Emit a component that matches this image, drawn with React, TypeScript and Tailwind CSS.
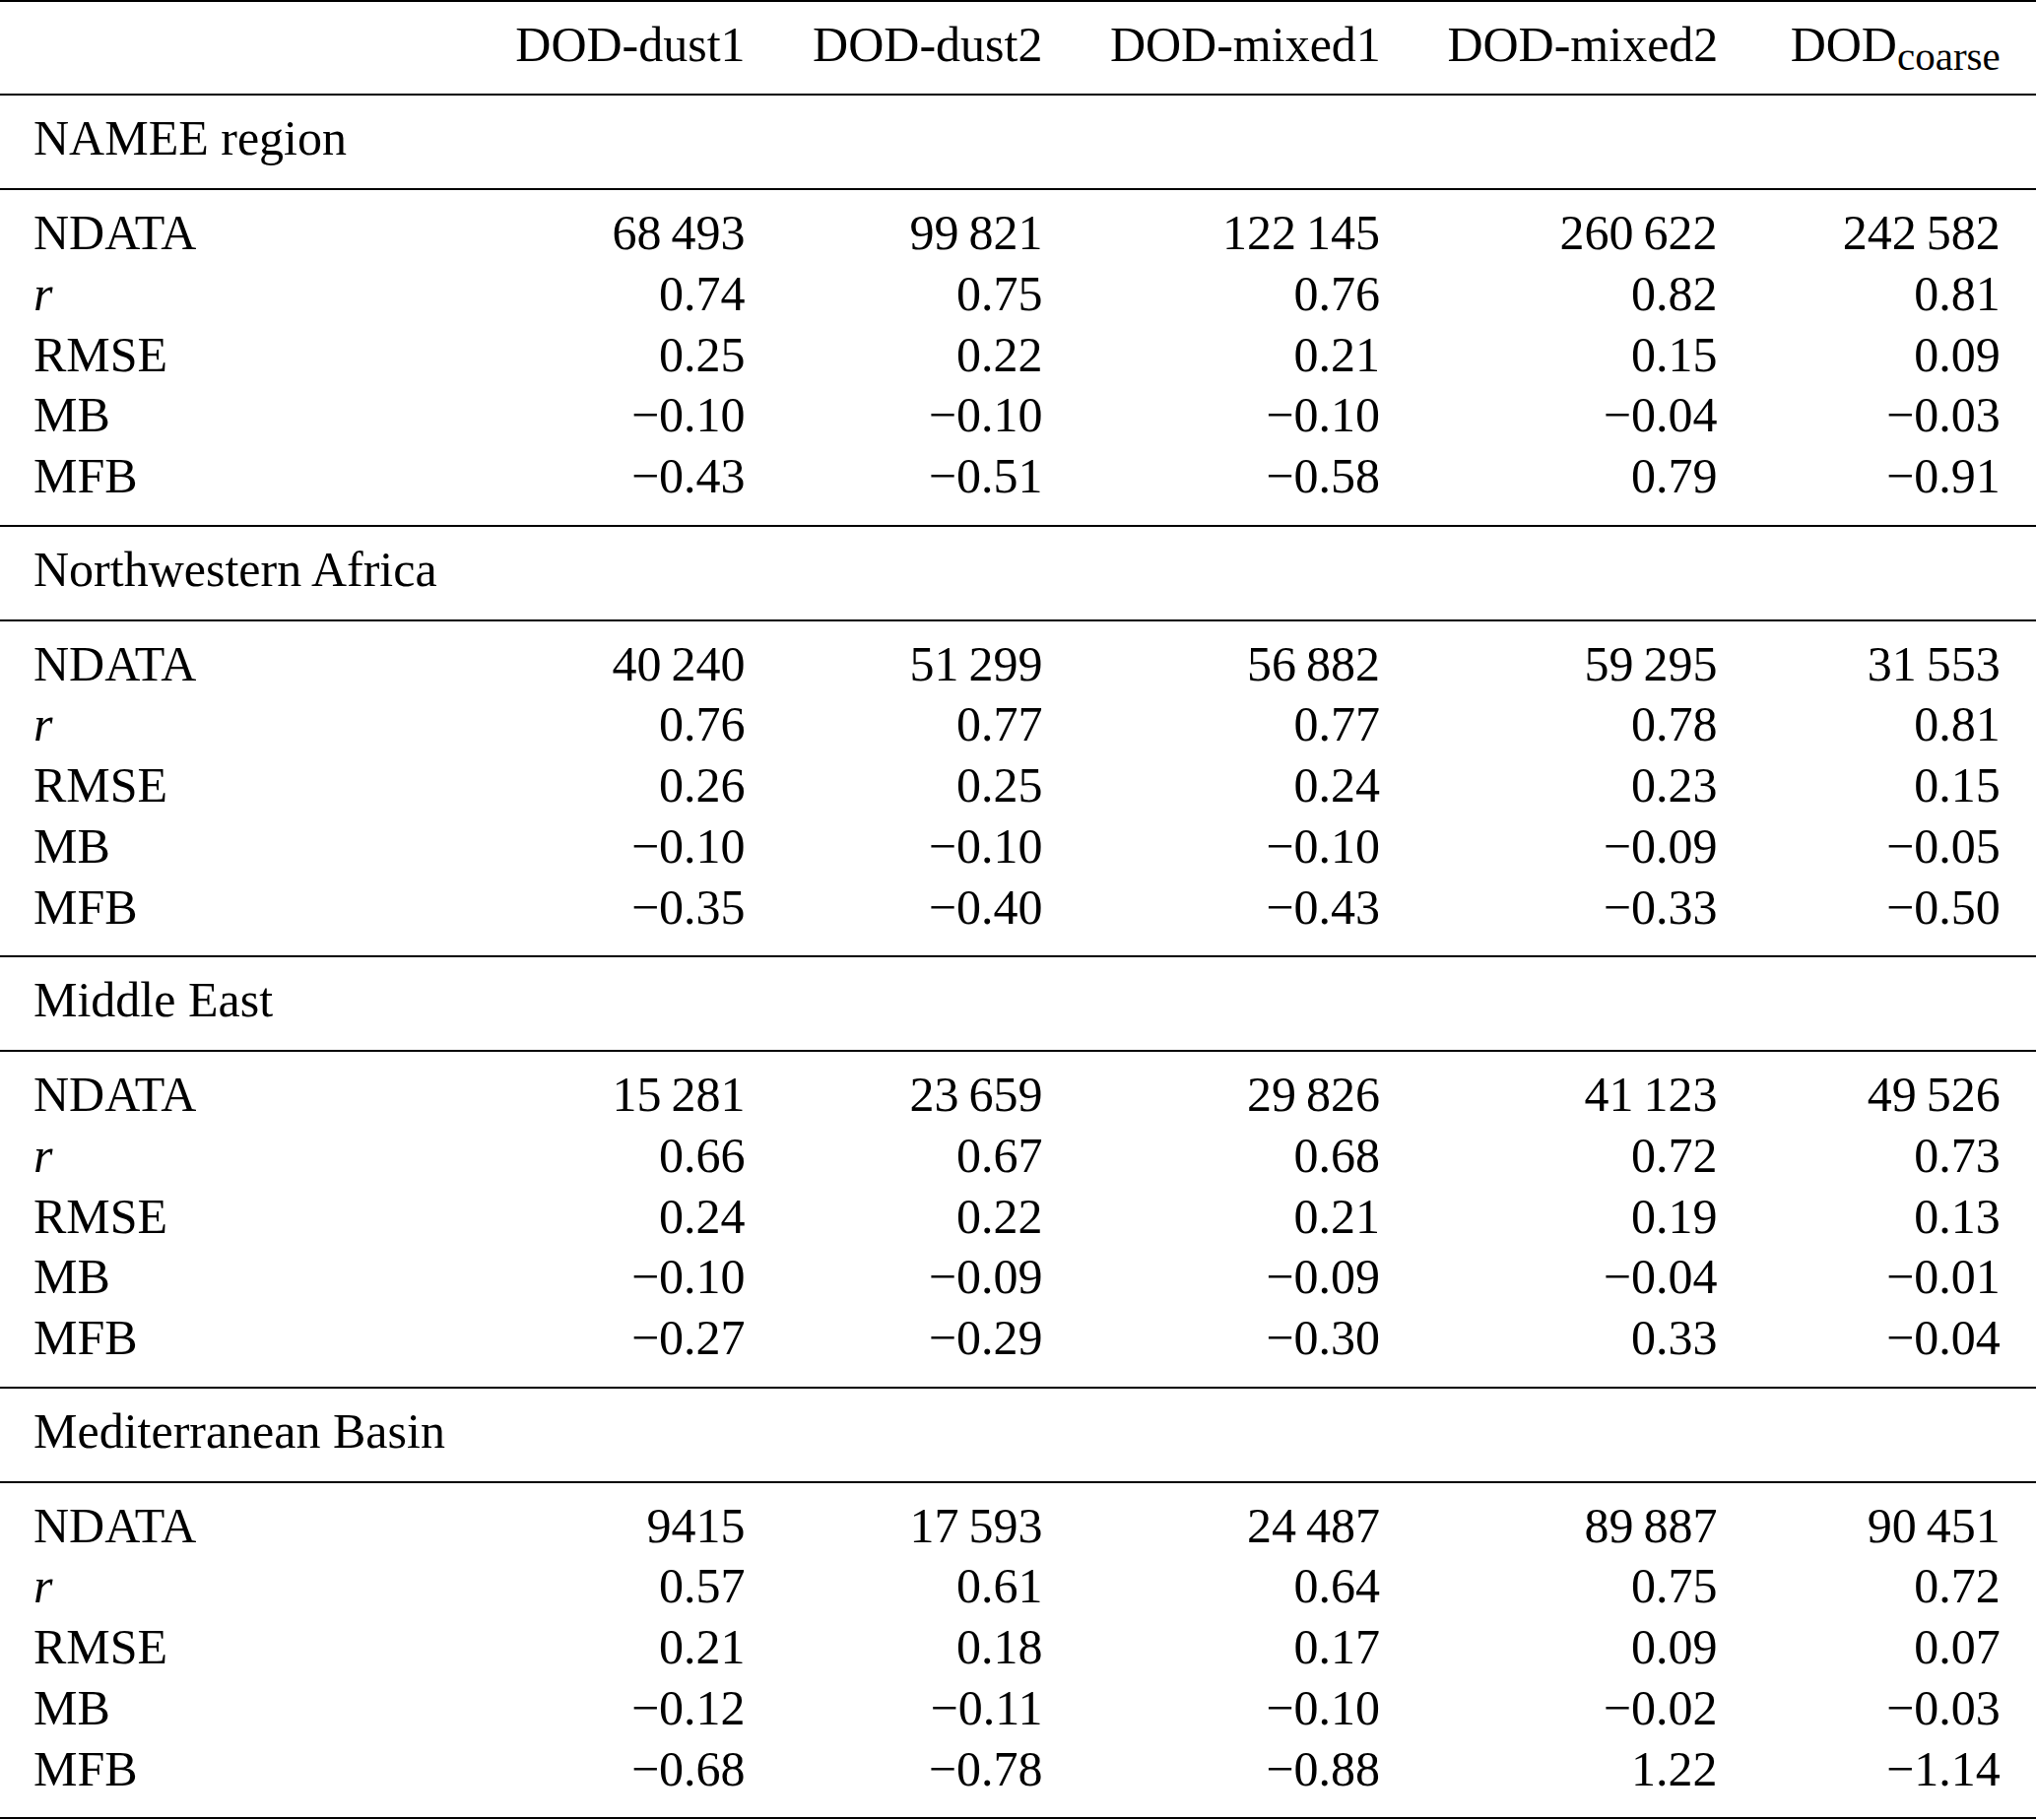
const cols = ["DOD-dust1", "DOD-dust2", "DOD-mixed1", "DOD-mixed2"];

type Section = { name: string; rows: [string, string[]][] };

const sections: Section[] = [
  {
    name: "NAMEE region",
    rows: [
      ["NDATA", ["68\u2009493", "99\u2009821", "122\u2009145", "260\u2009622", "242\u2009582"]],
      ["r", ["0.74", "0.75", "0.76", "0.82", "0.81"]],
      ["RMSE", ["0.25", "0.22", "0.21", "0.15", "0.09"]],
      ["MB", ["\u22120.10", "\u22120.10", "\u22120.10", "\u22120.04", "\u22120.03"]],
      ["MFB", ["\u22120.43", "\u22120.51", "\u22120.58", "0.79", "\u22120.91"]],
    ],
  },
  {
    name: "Northwestern Africa",
    rows: [
      ["NDATA", ["40\u2009240", "51\u2009299", "56\u2009882", "59\u2009295", "31\u2009553"]],
      ["r", ["0.76", "0.77", "0.77", "0.78", "0.81"]],
      ["RMSE", ["0.26", "0.25", "0.24", "0.23", "0.15"]],
      ["MB", ["\u22120.10", "\u22120.10", "\u22120.10", "\u22120.09", "\u22120.05"]],
      ["MFB", ["\u22120.35", "\u22120.40", "\u22120.43", "\u22120.33", "\u22120.50"]],
    ],
  },
  {
    name: "Middle East",
    rows: [
      ["NDATA", ["15\u2009281", "23\u2009659", "29\u2009826", "41\u2009123", "49\u2009526"]],
      ["r", ["0.66", "0.67", "0.68", "0.72", "0.73"]],
      ["RMSE", ["0.24", "0.22", "0.21", "0.19", "0.13"]],
      ["MB", ["\u22120.10", "\u22120.09", "\u22120.09", "\u22120.04", "\u22120.01"]],
      ["MFB", ["\u22120.27", "\u22120.29", "\u22120.30", "0.33", "\u22120.04"]],
    ],
  },
  {
    name: "Mediterranean Basin",
    rows: [
      ["NDATA", ["9415", "17\u2009593", "24\u2009487", "89\u2009887", "90\u2009451"]],
      ["r", ["0.57", "0.61", "0.64", "0.75", "0.72"]],
      ["RMSE", ["0.21", "0.18", "0.17", "0.09", "0.07"]],
      ["MB", ["\u22120.12", "\u22120.11", "\u22120.10", "\u22120.02", "\u22120.03"]],
      ["MFB", ["\u22120.68", "\u22120.78", "\u22120.88", "1.22", "\u22121.14"]],
    ],
  },
];

const grid =
  "grid grid-cols-[420.8px_233.3px_233.3px_274px_274px_218.8px] gap-x-[68.5px] pl-[34px]";

export default function App() {
  return (
    <div className="w-[2067px] h-[1848px] bg-white text-black font-['Liberation_Serif','Times_New_Roman',serif] text-[50px] leading-[61.75px]">
      <div className="border-t-2 border-black" />
      <div className={`${grid} h-[93px] pt-[13px]`}>
        <div />
        {cols.map((c) => (
          <div key={c} className="text-right whitespace-nowrap">
            {c}
          </div>
        ))}
        <div className="text-right whitespace-nowrap">
          DOD
          <span className="relative top-[9px] text-[41px]">coarse</span>
        </div>
      </div>

      {sections.map((s) => (
        <div key={s.name}>
          <div className="border-t-2 border-black" />
          <div className="h-[94px] pt-[13px] pl-[34px]">{s.name}</div>
          <div className="border-t-2 border-black" />
          <div className="h-[339.5px] pt-[13px]">
            {s.rows.map(([label, vals]) => (
              <div key={label} className={grid}>
                <div className={label === "r" ? "italic" : ""}>{label}</div>
                {vals.map((v, i) => (
                  <div key={i} className="text-right whitespace-nowrap">
                    {v}
                  </div>
                ))}
              </div>
            ))}
          </div>
        </div>
      ))}
      <div className="border-t-2 border-black" />
    </div>
  );
}
